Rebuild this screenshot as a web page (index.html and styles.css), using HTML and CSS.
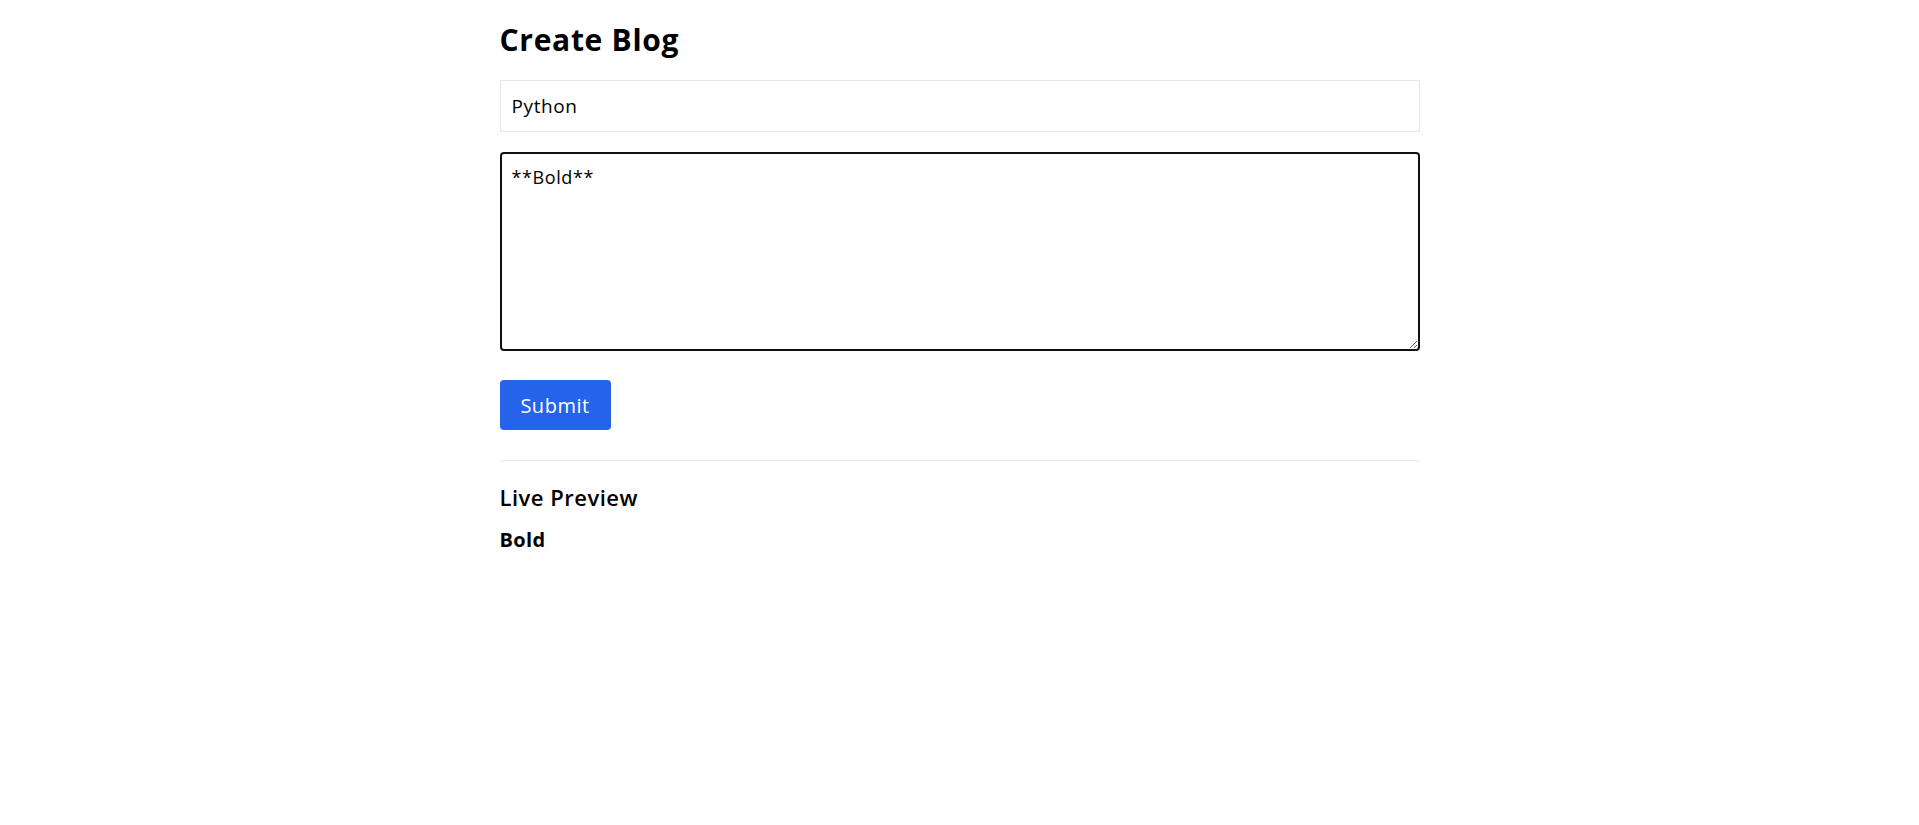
FILE: index.html
```html
<!DOCTYPE html>
<html lang="en">
<head>
<meta charset="utf-8">
<title>Create Blog</title>
<link rel="stylesheet" href="styles.css">
</head>
<body>
<div class="topbar"></div>
<main class="container">
  <h1 class="title">Create Blog</h1>
  <form class="form">
    <input class="field" type="text" value="Python">
    <textarea class="editor">**Bold**</textarea>
    <div class="actions"><button class="btn" type="button">Submit</button></div>
  </form>
  <hr class="divider">
  <section class="preview">
    <h2 class="preview-title">Live Preview</h2>
    <p class="preview-body"><strong>Bold</strong></p>
  </section>
</main>
</body>
</html>
```
FILE: styles.css
```css
* { box-sizing: border-box; }
html, body { margin: 0; background: #fff; }
body { font-family: "Open Sans", "Noto Sans", sans-serif; color: #000; }
.topbar { height: 0; box-shadow: 0 1px 4px rgba(0,0,0,0.18); }
.container { width: 920px; margin: 0 auto; padding-top: 20px; }
.title { margin: 0; font-size: 30px; font-weight: 700; line-height: 40px; letter-spacing: 0.7px; }
.form { display: flex; flex-direction: column; margin-top: 20px; }
.field { height: 52px; border: 1px solid #e5e7eb; padding: 0 11px; font: inherit; font-size: 19px; letter-spacing: 0.6px; color: #000; outline: none; }
.editor { margin-top: 20px; height: 199px; border: 2px solid #111; border-radius: 4px; padding: 10px 10px; font: inherit; font-size: 18px; letter-spacing: 0.6px; line-height: 27px; color: #000; resize: vertical; outline: none; }
.actions { margin-top: 29px; }
.btn { height: 50px; width: 111px; border: 0; border-radius: 4px; background: #2563eb; color: #fff; font: inherit; font-size: 20px; letter-spacing: 0.5px; padding: 0; }
.divider { margin: 30px 0 0; border: 0; border-top: 1px solid #e5e7eb; }
.preview-title { margin: 21px 0 0; font-size: 22px; font-weight: 600; line-height: 30px; letter-spacing: 0.5px; }
.preview-body { margin: 15px 0 0; font-size: 20px; line-height: 26px; letter-spacing: 0.4px; }
```
